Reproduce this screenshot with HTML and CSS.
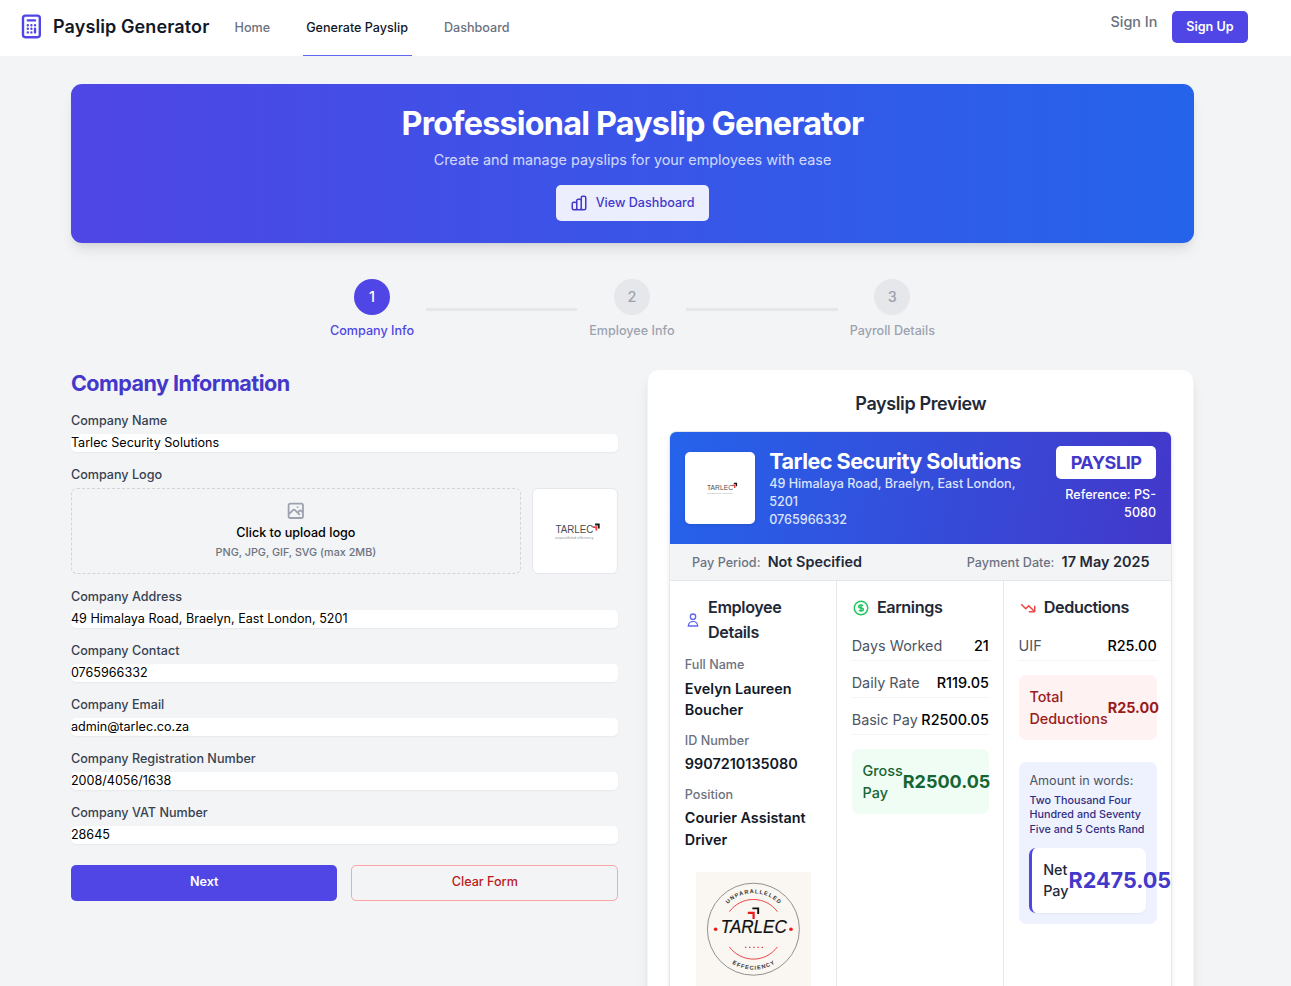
FILE: index.html
```html
<!DOCTYPE html>
<html lang="en">
<head>
<meta charset="utf-8">
<title>Payslip Generator</title>
<link rel="stylesheet" href="styles.css">
</head>
<body>
<header class="topbar">
  <div class="topbar-inner">
    <div class="brand">
      <svg class="brand-icon" viewBox="0 0 24 24"><path d="M9 7h6m0 10v-3m-3 3h.01M9 17h.01M9 14h.01M12 14h.01M15 11h.01M12 11h.01M9 11h.01M7 21h10a2 2 0 002-2V5a2 2 0 00-2-2H7a2 2 0 00-2 2v14a2 2 0 002 2z"/></svg>
      <span class="brand-name">Payslip Generator</span>
    </div>
    <nav class="nav">
      <a class="nav-link">Home</a>
      <a class="nav-link active">Generate Payslip</a>
      <a class="nav-link">Dashboard</a>
    </nav>
    <div class="auth">
      <a class="sign-in">Sign In</a>
      <a class="sign-up">Sign Up</a>
    </div>
  </div>
</header>

<main class="page">
  <section class="hero">
    <h1 class="hero-title">Professional Payslip Generator</h1>
    <p class="hero-text">Create and manage payslips for your employees with ease</p>
    <a class="hero-btn">
      <svg class="hero-icon" viewBox="0 0 24 24"><path d="M9 19v-6a2 2 0 00-2-2H5a2 2 0 00-2 2v6a2 2 0 002 2h2a2 2 0 002-2zm0 0V9a2 2 0 012-2h2a2 2 0 012 2v10m-6 0a2 2 0 002 2h2a2 2 0 002-2m0 0V5a2 2 0 012-2h2a2 2 0 012 2v14a2 2 0 01-2 2h-2a2 2 0 01-2-2z"/></svg>
      <span>View Dashboard</span>
    </a>
  </section>

  <div class="steps">
    <div class="step current"><span class="step-num">1</span><span class="step-label">Company Info</span></div>
    <div class="step-line"></div>
    <div class="step"><span class="step-num">2</span><span class="step-label">Employee Info</span></div>
    <div class="step-line"></div>
    <div class="step"><span class="step-num">3</span><span class="step-label">Payroll Details</span></div>
  </div>

  <div class="columns">
    <form class="form">
      <h2 class="form-title">Company Information</h2>
      <div class="field"><label class="label">Company Name</label><div class="input">Tarlec Security Solutions</div></div>
      <div class="field">
        <label class="label">Company Logo</label>
        <div class="upload-row">
          <div class="dropzone">
            <svg class="photo-icon" viewBox="0 0 24 24"><path d="M4 16l4.586-4.586a2 2 0 012.828 0L16 16m-2-2l1.586-1.586a2 2 0 012.828 0L20 14m-6-6h.01M6 20h12a2 2 0 002-2V6a2 2 0 00-2-2H6a2 2 0 00-2 2v12a2 2 0 002 2z"/></svg>
            <span class="drop-title">Click to upload logo</span>
            <span class="drop-hint">PNG, JPG, GIF, SVG (max 2MB)</span>
          </div>
          <div class="thumb">
            <svg class="thumb-logo" viewBox="0 0 86 86">
              <text x="23" y="45" class="logo-word" textLength="38.5" lengthAdjust="spacingAndGlyphs">TARLEC</text>
              <text x="22.5" y="51.4" class="logo-sub" textLength="39" lengthAdjust="spacingAndGlyphs">unparalleled efficiency</text>
              <path d="M63.3 36.2H67v4" class="mark-black"/><path d="M60.8 38.8h3.7v3.6" class="mark-red"/>
            </svg>
          </div>
        </div>
      </div>
      <div class="field"><label class="label">Company Address</label><div class="input">49 Himalaya Road, Braelyn, East London, 5201</div></div>
      <div class="field"><label class="label">Company Contact</label><div class="input">0765966332</div></div>
      <div class="field"><label class="label">Company Email</label><div class="input">admin@tarlec.co.za</div></div>
      <div class="field"><label class="label">Company Registration Number</label><div class="input">2008/4056/1638</div></div>
      <div class="field"><label class="label">Company VAT Number</label><div class="input">28645</div></div>
      <div class="actions"><a class="btn primary">Next</a><a class="btn danger">Clear Form</a></div>
    </form>

    <section class="preview">
      <h3 class="preview-title">Payslip Preview</h3>
      <div class="slip">
        <div class="slip-head">
          <div class="slip-logo">
            <svg class="slip-logo-art" viewBox="0 0 70 72">
              <text x="22" y="37.6" class="logo-word small" textLength="26" lengthAdjust="spacingAndGlyphs">TARLEC</text>
              <text x="22" y="41.6" class="logo-sub small" textLength="26" lengthAdjust="spacingAndGlyphs">unparalleled efficiency</text>
              <path d="M48.8 31.5h2.6v2.8" class="mark-black thin"/><path d="M47.2 33.4h2.5v2.5" class="mark-red thin"/>
            </svg>
          </div>
          <div class="slip-company">
            <div class="slip-name">Tarlec Security Solutions</div>
            <div class="slip-addr">49 Himalaya Road, Braelyn, East London, 5201</div>
            <div class="slip-addr">0765966332</div>
          </div>
          <div class="slip-ref">
            <div class="badge">PAYSLIP</div>
            <div class="ref-text">Reference: PS-5080</div>
          </div>
        </div>
        <div class="period">
          <div class="pair"><span class="pair-key">Pay Period:</span><span class="pair-val">Not Specified</span></div>
          <div class="pair"><span class="pair-key">Payment Date:</span><span class="pair-val">17 May 2025</span></div>
        </div>
        <div class="slip-cols">
          <div class="slip-col">
            <h4 class="col-title employee"><svg class="col-icon indigo" viewBox="0 0 24 24"><path d="M16 7a4 4 0 11-8 0 4 4 0 018 0zM12 14a7 7 0 00-7 7h14a7 7 0 00-7-7z"/></svg><span>Employee Details</span></h4>
            <div class="info"><div class="info-key">Full Name</div><div class="info-val">Evelyn Laureen Boucher</div></div>
            <div class="info"><div class="info-key">ID Number</div><div class="info-val">9907210135080</div></div>
            <div class="info"><div class="info-key">Position</div><div class="info-val">Courier Assistant Driver</div></div>
            <svg class="stamp" viewBox="0 0 115.2 115.2">
              <rect width="115.2" height="115.2" fill="#faf6f1"/>
              <circle cx="57.4" cy="57.2" r="46" fill="none" stroke="#777" stroke-width=".8"/>
              <path id="arc-top" d="M21.4 57.2a36 36 0 0172 0" fill="none"/>
              <path id="arc-bottom" d="M16.9 57.2a40.5 40.5 0 0081 0" fill="none"/>
              <text class="stamp-text" text-anchor="middle"><textPath href="#arc-top" startOffset="50%" textLength="57">UNPARALLELED</textPath></text>
              <text class="stamp-text" text-anchor="middle"><textPath href="#arc-bottom" startOffset="50%" textLength="45">EFFECIENCY</textPath></text>
              <path d="M33.4 39.7a29.7 29.7 0 0148 0M33.4 74.9a29.7 29.7 0 0048 0" fill="none" stroke="#f04444" stroke-width="1"/>
              <circle cx="19.6" cy="57.3" r="1.8" fill="#f01818"/><circle cx="95" cy="57.3" r="1.8" fill="#f01818"/>
              <path d="M56.4 36.4h5.8v5.6" fill="none" stroke="#111" stroke-width="1.9"/>
              <path d="M51.8 40.9h5.8v6" fill="none" stroke="#f01818" stroke-width="2.2"/>
              <text x="24.8" y="60.7" class="stamp-word" textLength="66" lengthAdjust="spacingAndGlyphs">TARLEC</text>
              <path d="M49 75.4h18" fill="none" stroke="#d33" stroke-width="1.4" stroke-dasharray="1.3 2.85"/>
            </svg>
          </div>
          <div class="slip-col">
            <h4 class="col-title"><svg class="col-icon green" viewBox="0 0 24 24"><path d="M12 8c-1.657 0-3 .895-3 2s1.343 2 3 2 3 .895 3 2-1.343 2-3 2m0-8c1.11 0 2.08.402 2.599 1M12 8V7m0 1v8m0 0v1m0-1c-1.11 0-2.08-.402-2.599-1M21 12a9 9 0 11-18 0 9 9 0 0118 0z"/></svg><span>Earnings</span></h4>
            <div class="row"><span class="row-key">Days Worked</span><span class="row-val">21</span></div>
            <div class="row"><span class="row-key">Daily Rate</span><span class="row-val">R119.05</span></div>
            <div class="row"><span class="row-key">Basic Pay</span><span class="row-val">R2500.05</span></div>
            <div class="total gross"><span class="total-key">Gross Pay</span><span class="total-val">R2500.05</span></div>
          </div>
          <div class="slip-col">
            <h4 class="col-title"><svg class="col-icon red" viewBox="0 0 24 24"><path d="M13 17h8m0 0V9m0 8l-8-8-4 4-6-6"/></svg><span>Deductions</span></h4>
            <div class="row"><span class="row-key">UIF</span><span class="row-val">R25.00</span></div>
            <div class="total deduct"><span class="total-key">Total Deductions</span><span class="total-val">R25.00</span></div>
            <div class="words">
              <div class="words-key">Amount in words:</div>
              <div class="words-val">Two Thousand Four Hundred and Seventy Five and 5 Cents Rand</div>
              <div class="net"><span class="total-key">Net Pay</span><span class="total-val">R2475.05</span></div>
            </div>
          </div>
        </div>
      </div>
    </section>
  </div>
</main>
</body>
</html>
```

FILE: styles.css
```css
html { font-size: 14.4px; }
*, *::before, *::after { box-sizing: border-box; }
body { margin: 0; height: 986px; overflow: hidden; background: #f3f4f6; color: #000; font-family: Inter, "Liberation Sans", sans-serif; font-size: 1rem; line-height: 1.5; }
h1, h2, h3, h4, p { margin: 0; }
svg { display: block; flex-shrink: 0; overflow: visible; }

.topbar { background: #fff; height: 56px; padding: 0 43px 0 17px; }
.topbar-inner { display: flex; height: 56px; }
.brand { display: flex; align-items: center; gap: .5rem; height: 53px; }
.brand-icon { width: 2rem; height: 2rem; fill: none; stroke: #4f46e5; stroke-width: 2; stroke-linecap: round; stroke-linejoin: round; }
.brand-name { font-size: 1.25rem; font-weight: 600; letter-spacing: .11px; color: #111827; white-space: nowrap; }
.nav { display: flex; gap: 2rem; margin-left: 1.5rem; }
.nav-link { display: flex; align-items: center; padding: 2px .25rem 0; border-bottom: 1px solid transparent; font-size: .875rem; font-weight: 500; color: #6b7280; white-space: nowrap; }
.nav-link.active { color: #111827; border-color: #6366f1; }
.auth { display: flex; gap: 1rem; align-items: flex-start; margin-left: auto; padding-top: 11px; }
.sign-in { color: #6b7280; font-weight: 500; }
.sign-up { background: #4f46e5; color: #fff; font-size: .875rem; font-weight: 600; line-height: 18px; padding: 7px 1rem; border-radius: 5px; }

.page { width: 1123.2px; margin: 28px 0 0 70.9px; }
.hero { display: flex; flex-direction: column; align-items: center; height: 159px; padding: 1.5rem; border-radius: 11px; background: linear-gradient(90deg, #4f46e5, #2563eb); box-shadow: 0 9px 14px -3px rgba(0,0,0,.1), 0 4px 6px -4px rgba(0,0,0,.1); }
.hero-title { font-size: 2.25rem; line-height: 2.5rem; font-weight: 700; letter-spacing: -.025em; color: #fff; }
.hero-text { margin-top: .5rem; color: #e0e7ff; opacity: .9; }
.hero-btn { display: flex; align-items: center; gap: 8px; height: 2.5rem; flex-shrink: 0; margin-top: 1rem; padding: 1px 14.4px 0 13.6px; border-radius: 5px; background: rgba(255,255,255,.9); color: #4338ca; font-size: .875rem; font-weight: 500; }
.hero-icon { width: 18px; height: 18px; fill: none; stroke: currentColor; stroke-width: 2; }

.steps { display: flex; align-items: center; width: 605px; margin: 36px auto 0; }
.step { display: flex; flex-direction: column; align-items: center; gap: .5rem; color: #9ca3af; }
.step-num { display: flex; align-items: center; justify-content: center; width: 2.5rem; height: 2.5rem; padding-bottom: 1px; border-radius: 50%; background: #e5e7eb; font-weight: 500; }
.step-label { font-size: .875rem; line-height: 1.25rem; font-weight: 500; white-space: nowrap; }
.step.current { color: #4f46e5; }
.step.current .step-num { background: #4f46e5; color: #fff; }
.step-line { flex: 1; height: 3px; margin: 0 11.8px; background: #e5e7eb; }

.columns { display: grid; grid-template-columns: 1fr 1fr; gap: 2rem; margin-top: 29px; align-items: start; }
.form-title { font-size: 1.5rem; line-height: 2rem; font-weight: 700; letter-spacing: -.53px; color: #4338ca; margin-bottom: 14px; }
.field { margin-bottom: 1rem; }
.label { display: block; font-size: .875rem; line-height: 1.25rem; font-weight: 500; color: #374151; margin-bottom: .25rem; }
.input { height: 18px; font-size: .875rem; line-height: 18px; background: #fff; border-radius: 5px; box-shadow: 0 1px 2px rgba(0,0,0,.05); }
.upload-row { display: flex; gap: .75rem; }
.dropzone { flex: 1; display: flex; flex-direction: column; align-items: center; height: 6rem; padding-top: 11px; border: 1px dashed #d1d5db; border-radius: 6px; }
.photo-icon { width: 1.5rem; height: 1.5rem; fill: none; stroke: #9ca3af; stroke-width: 2; stroke-linecap: round; stroke-linejoin: round; }
.drop-title { margin-top: 3px; font-size: .875rem; line-height: 18px; font-weight: 500; }
.drop-hint { margin-top: 4px; font-size: .75rem; line-height: 1rem; font-weight: 500; color: #6b7280; }
.thumb { width: 6rem; height: 6rem; background: #fff; border: 1px solid #e5e7eb; border-radius: 6px; }
.thumb-logo { width: 100%; height: 100%; }
.logo-word { font: 10.6px "Liberation Sans", sans-serif; fill: #4b4b55; }
.logo-word.small { font-size: 7px; }
.logo-sub { font: 4px "Liberation Sans", sans-serif; fill: #999; }
.logo-sub.small { font-size: 2.5px; }
.mark-black { fill: none; stroke: #16161c; stroke-width: 1.9; }
.mark-red { fill: none; stroke: #f04040; stroke-width: 1.8; }
.thin { stroke-width: 1.4; }
.actions { display: grid; grid-template-columns: 1fr 1fr; gap: 14px; margin-top: 21px; }
.btn { display: flex; align-items: center; justify-content: center; height: 2.5rem; border-radius: 5px; font-size: .875rem; font-weight: 500; }
.btn.primary { background: #4f46e5; color: #fff; font-weight: 600; }
.btn.danger { border: 1px solid #fca5a5; color: #b91c1c; }

.preview { height: 700px; padding: 20.8px 21px 20.8px 21.6px; background: #fff; border: 1px solid #f3f4f6; background-clip: padding-box; border-radius: 11px; box-shadow: 0 9px 14px -3px rgba(0,0,0,.1), 0 4px 6px -4px rgba(0,0,0,.1); }
.preview-title { font-size: 1.25rem; line-height: 1.75rem; font-weight: 600; letter-spacing: -.38px; color: #1f2937; text-align: center; margin-bottom: 14.8px; }
.slip { border: 1px solid #e5e7eb; border-radius: 7px; overflow: hidden; height: 640px; box-shadow: 0 4px 6px -1px rgba(0,0,0,.1); }
.slip-head { display: flex; align-items: center; gap: 1rem; padding: 1rem 15px 1rem 1rem; height: 112px; background: linear-gradient(100deg, #2563eb, #4338ca); color: #fff; }
.slip-logo { flex: 0 0 70px; height: 72px; background: #fff; border-radius: 5px; box-shadow: 0 1px 3px rgba(0,0,0,.1); }
.slip-logo-art { width: 70px; height: 72px; }
.slip-company { flex: 1; }
.slip-name { font-size: 1.5rem; line-height: 2rem; font-weight: 700; letter-spacing: -.52px; white-space: nowrap; }
.slip-addr { font-size: .875rem; line-height: 1.25rem; font-weight: 500; letter-spacing: -.02px; color: #dbe3fd; }
.slip-ref { align-self: flex-start; flex: 0 0 100px; margin-top: -.4px; text-align: right; }
.badge { height: 33px; line-height: 33px; text-align: center; background: #fff; border-radius: 5px; color: #4338ca; font-size: 1.25rem; font-weight: 700; letter-spacing: -.025em; }
.ref-text { margin-top: .5rem; font-size: .875rem; line-height: 1.25rem; font-weight: 500; }
.period { display: flex; justify-content: space-between; padding: 6.8px 1.5rem; height: 37px; background: #f3f4f6; border-bottom: 1px solid #e5e7eb; }
.pair { display: flex; align-items: baseline; gap: .5rem; }
.pair-key { font-size: .875rem; font-weight: 500; color: #6b7280; }
.pair-val { font-weight: 600; color: #1f2937; }
.slip-cols { display: grid; grid-template-columns: repeat(3, minmax(0, 1fr)); height: 490px; }
.slip-col { padding: 1rem; padding-top: 14px; border-right: 1px solid #e5e7eb; }
.slip-col:last-child { border-right: 0; }
.col-title { display: flex; align-items: center; gap: .5rem; margin-bottom: 1rem; font-size: 1.125rem; line-height: 1.75rem; font-weight: 600; letter-spacing: -.025em; color: #1f2937; }
.col-title.employee { margin-bottom: .75rem; }
.col-icon { width: 18px; height: 18px; fill: none; stroke-width: 2; }
.employee .col-icon { width: 16px; }
.indigo { stroke: #6366f1; }
.green { stroke: #22c55e; }
.red { stroke: #ef4444; }
.info { margin-bottom: .75rem; }
.info-key { font-size: .875rem; line-height: 1.25rem; font-weight: 500; color: #6b7280; }
.info-val { margin-top: .25rem; font-weight: 600; color: #111827; }
.stamp { width: 115.2px; height: 115.2px; margin: 1.5rem auto 0; }
.stamp-text { font: 700 5.6px "Liberation Sans", sans-serif; fill: #333; }
.stamp-word { font: italic 17.7px "Liberation Sans", sans-serif; fill: #111; stroke: #111; stroke-width: .2; }
.row { display: flex; justify-content: space-between; padding-bottom: .25rem; border-bottom: 1px solid #f3f4f6; margin-bottom: .75rem; white-space: nowrap; }
.row-key { color: #4b5563; }
.row-val { font-weight: 500; }
.total, .net { display: flex; align-items: center; justify-content: space-between; padding: .75rem; border-radius: 7px; }
.total { margin-top: 1rem; }
.total-key { font-weight: 500; }
.total-val { font-weight: 700; }
.gross { background: #f0fdf4; color: #166534; }
.gross .total-val { font-size: 1.25rem; }
.deduct { background: #fef2f2; color: #991b1b; }
.words { margin-top: 1.5rem; padding: .75rem; border-radius: 7px; background: #eef2ff; }
.words-key { font-size: .875rem; line-height: 1.25rem; color: #4b5563; white-space: nowrap; }
.words-val { margin-top: .25rem; font-size: .75rem; line-height: 1rem; font-weight: 500; color: #312e81; }
.net { margin-top: .75rem; background: #fff; border-left: 3px solid #4f46e5; color: #1f2937; box-shadow: 0 1px 2px rgba(0,0,0,.05); }
.net .total-val { font-size: 1.5rem; color: #4338ca; }
```
